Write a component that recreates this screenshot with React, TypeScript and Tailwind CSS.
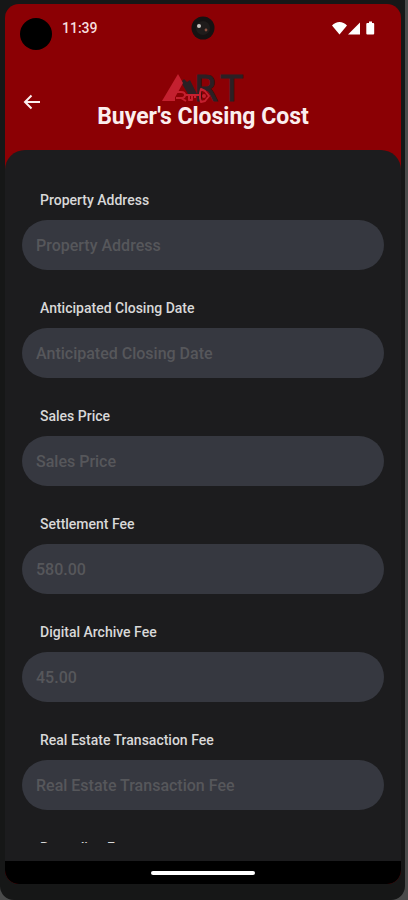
const fields = [
  { id: "property-address", label: "Property Address", placeholder: "Property Address" },
  { id: "closing-date", label: "Anticipated Closing Date", placeholder: "Anticipated Closing Date" },
  { id: "sales-price", label: "Sales Price", placeholder: "Sales Price" },
  { id: "settlement-fee", label: "Settlement Fee", placeholder: "580.00" },
  { id: "archive-fee", label: "Digital Archive Fee", placeholder: "45.00" },
  { id: "transaction-fee", label: "Real Estate Transaction Fee", placeholder: "Real Estate Transaction Fee" },
  { id: "recording-fee", label: "Recording Fee", placeholder: "Recording Fee" },
];

function StatusBar() {
  return (
    <div className="flex h-12 items-center justify-between px-[15px]">
      <div className="flex flex-1 items-center gap-2.5">
        <span className="mt-3 size-8 rounded-full bg-black" />
        <span className="text-sm font-medium text-[#f6dede]">11:39</span>
      </div>
      <svg viewBox="0 0 24 24" className="size-6" aria-hidden="true">
        <circle cx="12" cy="12" r="11.5" fill="#151212" />
        <circle cx="12" cy="12" r="7" fill="#1f1c1b" />
        <circle cx="8" cy="10" r="2" fill="#c9c4c0" />
        <circle cx="15" cy="14" r="1.4" fill="#8a5040" />
      </svg>
      <div className="flex flex-1 justify-end">
        <svg viewBox="0 0 44 14" className="mr-2.5 h-3.5 w-11" fill="#fff" aria-hidden="true">
          <path d="M0 4.500C4-.2 11-.2 15 4.500L7.500 13.500Z" />
          <path d="M28 1.500V13.500H16Z" />
          <path d="M37 .5h3v1.500h1.200q1 0 1 1v9.500q0 1-1 1h-5.900q-1 0-1-1V3q0-1 1-1H37Z" />
        </svg>
      </div>
    </div>
  );
}

function Logo() {
  return (
    <svg viewBox="0 0 84 28" className="h-7 w-21 overflow-visible" role="img" aria-label="ART">
      <g fontFamily="DejaVu Sans, sans-serif" fontSize="35" fill="#2b2024" stroke="#2b2024">
        <text x="33" y="27">R</text>
        <text x="60" y="27">T</text>
      </g>
      <path d="M20 8 23 5 26 8 29 6 36 20H27Z" fill="#2b2024" />
      <path d="M17 0 22 9 12 27H1Z" fill="#c4202f" />
      <g fill="none" stroke="#c4202f" strokeWidth="2" strokeLinejoin="round">
        <path d="M13 27v-9h7q4 0 4 3t-4 3h-5M20 24l5 3M24 21h15M28 21v5h3v-4M34 21v3" />
        <path d="M39 19l1-4 4 2 4 5-4 5-4 1-1-4z" />
        <circle cx="43" cy="22" r="1" />
      </g>
    </svg>
  );
}

function Header() {
  return (
    <header className="relative flex flex-col items-center pt-[22px] pb-[18px]">
      <button type="button" aria-label="Back" className="absolute top-9 left-3 p-1 text-[#fbeeee]">
        <svg viewBox="0 0 20 20" className="size-5" fill="none" stroke="currentColor" strokeWidth="2" aria-hidden="true">
          <path d="M19 10H4M10.500 3.500 4 10l6.500 6.500" />
        </svg>
      </button>
      <Logo />
      <h1 className="text-[23px] leading-[30px] font-bold text-[#fbeeee]">Buyer's Closing Cost</h1>
    </header>
  );
}

export default function App() {
  return (
    <div className="h-screen bg-[#4a4b4b] pr-[3px] font-['Roboto',sans-serif]">
      <div className="flex h-full flex-col rounded-b-[14px] bg-[#161717] pt-1 pr-1 pb-4 pl-[5px]">
        <div className="flex min-h-0 flex-1 flex-col overflow-hidden rounded-[14px] bg-[#8b0004]">
          <StatusBar />
          <Header />
          <main className="min-h-0 flex-1 rounded-t-[20px] bg-[#1c1c1e] px-[17px] pb-[18px]">
            <form className="flex h-full flex-col gap-7 overflow-hidden pt-10">
              {fields.map((field) => (
                <div key={field.id} className="flex shrink-0 flex-col gap-2.5">
                  <label htmlFor={field.id} className="px-[18px] text-sm font-medium text-[#d8d8d8]">
                    {field.label}
                  </label>
                  <input
                    id={field.id}
                    placeholder={field.placeholder}
                    className="h-[50px] w-full rounded-full bg-[#363840] px-3.5 text-base font-medium text-white outline-none placeholder:text-[#56575b]"
                  />
                </div>
              ))}
            </form>
          </main>
          <div className="flex h-[23px] shrink-0 items-center justify-center bg-black">
            <span className="h-1 w-[104px] rounded-full bg-white" />
          </div>
        </div>
      </div>
    </div>
  );
}
